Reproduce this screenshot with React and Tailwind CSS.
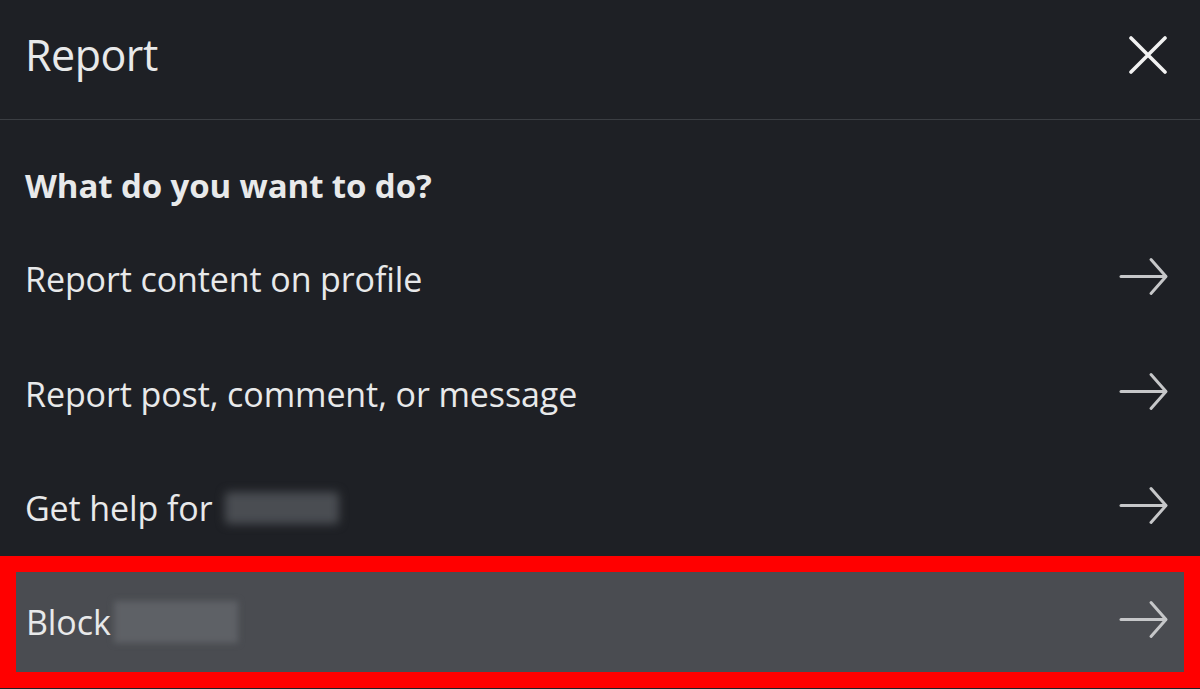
import React from "react";

const Arrow = () => (
  <svg width="50" height="40" viewBox="0 0 50 40" fill="none" className="shrink-0 -mt-[4px]">
    <path d="M2 19.5H46.5" stroke="#c6c7c9" strokeWidth="3" strokeLinecap="round" />
    <path d="M32 2.5L47 19.5L32 36.5" stroke="#c6c7c9" strokeWidth="3" strokeLinecap="round" strokeLinejoin="round" />
  </svg>
);

export default function App() {
  return (
    <div
      className="w-[1200px] h-[689px] overflow-hidden bg-[#1e2025] text-[#e8e9ea] flex flex-col"
      style={{ fontFamily: '"Open Sans", "Noto Sans", sans-serif' }}
    >
      <div className="h-[120px] shrink-0 flex items-center justify-between pl-[25px] pr-[33px] border-b border-[#3b3e43]">
        <div className="text-[43px] leading-none -mt-[10px] tracking-[-0.5px]">Report</div>
        <svg width="38" height="38" viewBox="0 0 38 38" className="-mt-[10px]">
          <path d="M2 2L36 36M36 2L2 36" stroke="#f2f2f2" strokeWidth="3.6" strokeLinecap="round" />
        </svg>
      </div>
      <div className="h-[100px] shrink-0 flex items-center pl-[25px] pt-[30px]">
        <div className="text-[33px] font-bold leading-none tracking-[-0.1px]">What do you want to do?</div>
      </div>
      <div className="h-[115px] shrink-0 flex items-center justify-between pl-[25px] pr-[31px] pt-[2px]">
        <div className="text-[34px] leading-none tracking-[-0.1px]">Report content on profile</div>
        <Arrow />
      </div>
      <div className="h-[115px] shrink-0 flex items-center justify-between pl-[25px] pr-[31px] pt-[3px]">
        <div className="text-[34px] leading-none tracking-[-0.1px]">Report post, comment, or message</div>
        <Arrow />
      </div>
      <div className="h-[106px] shrink-0 flex items-center justify-between pl-[25px] pr-[31px] pt-[9px]">
        <div className="text-[34px] leading-none tracking-[-0.1px] flex items-center gap-[12px]">
          <span>Get help for</span>
          <span className="inline-block w-[114px] h-[32px] rounded bg-[#4a4d52] blur-[5px]" />
        </div>
        <Arrow />
      </div>
      <div className="h-[132px] shrink-0 border-[16px] border-[#ff0000] bg-[#4a4c51] flex items-center justify-between pl-[10px] pr-[15px]">
        <div className="text-[34px] leading-none tracking-[-0.1px] flex items-center gap-[3px]">
          <span>Block</span>
          <span className="inline-block w-[124px] h-[42px] bg-[#5e6166] blur-[3px]" />
        </div>
        <Arrow />
      </div>
    </div>
  );
}
